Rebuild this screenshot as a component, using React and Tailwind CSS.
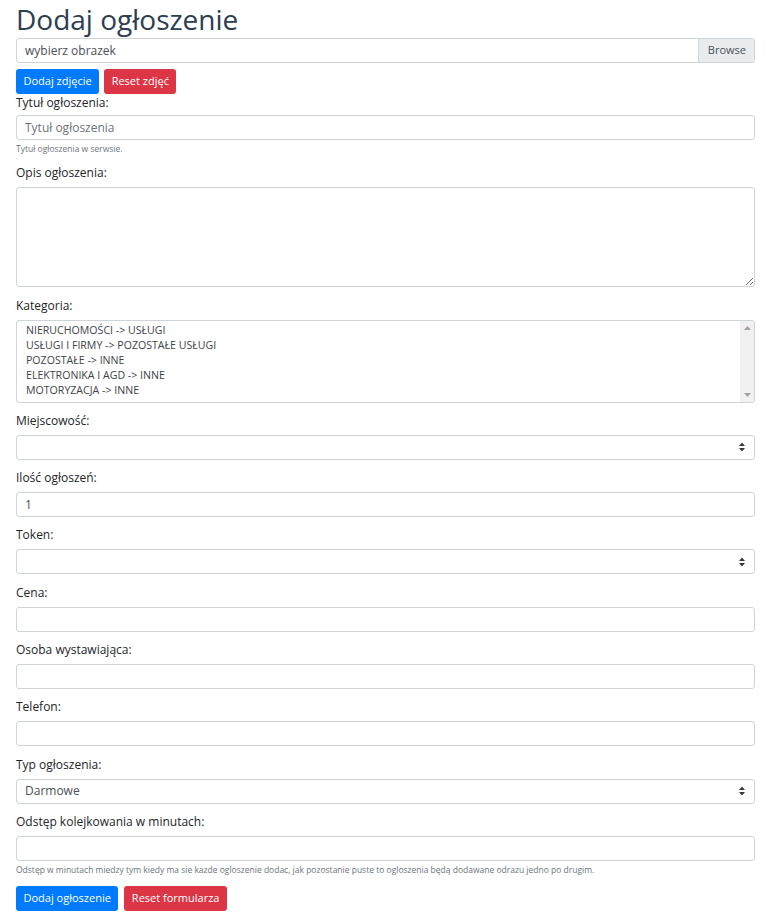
import React from "react";

const kategorie = [
  "NIERUCHOMOŚCI -> USŁUGI",
  "USŁUGI I FIRMY -> POZOSTAŁE USŁUGI",
  "POZOSTAŁE -> INNE",
  "ELEKTRONIKA I AGD -> INNE",
  "MOTORYZACJA -> INNE",
];

const inputCls =
  "block w-full h-[25px] px-[8px] text-[12px] text-[#495057] bg-white border border-[#ced4da] rounded-[3px] outline-none";

const btnCls = "h-[25px] px-[7.5px] text-[11px] text-white rounded-[3px]";

const Label = ({ children }) => (
  <label className="block text-[12px] leading-[18px] text-[#212529] mb-[5px]">
    {children}
  </label>
);

const SelectArrows = () => (
  <svg
    className="absolute right-[10px] top-1/2 -translate-y-1/2 pointer-events-none"
    width="6"
    height="9"
    viewBox="0 0 6 9"
  >
    <path d="M3 0 L6 3.5 H0 Z M3 9 L0 5.5 H6 Z" fill="#343a40" />
  </svg>
);

const Field = ({ label, children }) => (
  <div className="mb-[9.3px]">
    <Label>{label}</Label>
    {children}
  </div>
);

const FakeSelect = ({ value }) => (
  <div className="relative">
    <select className={`${inputCls} appearance-none`} defaultValue={value || ""}>
      {value ? <option>{value}</option> : <option value=""></option>}
    </select>
    <SelectArrows />
  </div>
);

export default function App() {
  return (
    <div
      className="min-h-screen bg-white px-[16px] pr-[14px] text-[#212529]"
      style={{ fontFamily: '"Open Sans", "Noto Sans", sans-serif' }}
    >
      {/* Header */}
      <h1 className="text-[28px] leading-[36px] pt-[1px] text-[#2c3e50] font-normal mb-[1px]">
        Dodaj ogłoszenie
      </h1>

      {/* Plik */}
      <div className="flex h-[25px] border border-[#ced4da] rounded-[3px] overflow-hidden text-[12px]">
        <div className="flex-1 flex items-center px-[8px] text-[#495057]">
          wybierz obrazek
        </div>
        <div className="flex items-center pl-[9px] pr-[8px] bg-[#e9ecef] border-l border-[#ced4da] text-[#495057] text-[11px]">
          Browse
        </div>
      </div>

      <div className="flex gap-[5px] mt-[6px]">
        <button className={`${btnCls} bg-[#007bff]`}>Dodaj zdjęcie</button>
        <button className={`${btnCls} bg-[#dc3545]`}>Reset zdjęć</button>
      </div>

      {/* Tytuł */}
      <div className="mb-[9.3px]">
        <label className="block text-[12px] leading-[18px] mb-[3px]">Tytuł ogłoszenia:</label>
        <input className={`${inputCls} placeholder:text-[#6c757d]`} placeholder="Tytuł ogłoszenia" />
        <p className="text-[8.5px] leading-[12px] text-[#6c757d] mt-[3px]">
          Tytuł ogłoszenia w serwsie.
        </p>
      </div>

      <Field label="Opis ogłoszenia:">
        <textarea className="block w-full h-[100px] px-[8px] py-[4px] text-[12px] border border-[#ced4da] rounded-[3px] outline-none" />
      </Field>

      <Field label="Kategoria:">
        <div className="flex h-[83px] border border-[#ced4da] rounded-[3px] overflow-hidden">
          <ul className="flex-1 px-[9px] pt-[2px] text-[10.6px] leading-[15px] text-[#3d4349]">
            {kategorie.map((k) => (
              <li key={k}>{k}</li>
            ))}
          </ul>
          {/* scrollbar */}
          <div className="w-[14px] bg-[#f1f1f1] flex flex-col items-center justify-between py-[5px]">
            <svg width="7" height="4" viewBox="0 0 7 4">
              <path d="M3.5 0 L7 4 H0 Z" fill="#a3a3a3" />
            </svg>
            <svg width="7" height="4" viewBox="0 0 7 4">
              <path d="M0 0 H7 L3.5 4 Z" fill="#a3a3a3" />
            </svg>
          </div>
        </div>
      </Field>

      <Field label="Miejscowość:">
        <FakeSelect />
      </Field>

      <Field label="Ilość ogłoszeń:">
        <input className={inputCls} defaultValue="1" />
      </Field>

      <Field label="Token:">
        <FakeSelect />
      </Field>

      <Field label="Cena:">
        <input className={inputCls} />
      </Field>

      <Field label="Osoba wystawiająca:">
        <input className={inputCls} />
      </Field>

      <Field label="Telefon:">
        <input className={inputCls} />
      </Field>

      <Field label="Typ ogłoszenia:">
        <FakeSelect value="Darmowe" />
      </Field>

      <div className="mb-[9px]">
        <Label>Odstęp kolejkowania w minutach:</Label>
        <input className={inputCls} />
        <p className="text-[8.5px] leading-[12px] text-[#6c757d] mt-[3px]">
          Odstęp w minutach miedzy tym kiedy ma sie kazde ogloszenie dodac, jak pozostanie puste to ogloszenia będą dodawane odrazu jedno po drugim.
        </p>
      </div>

      <div className="flex gap-[6px] mt-[10px]">
        <button className={`${btnCls} bg-[#007bff]`}>Dodaj ogłoszenie</button>
        <button className={`${btnCls} bg-[#dc3545]`}>Reset formularza</button>
      </div>
    </div>
  );
}
